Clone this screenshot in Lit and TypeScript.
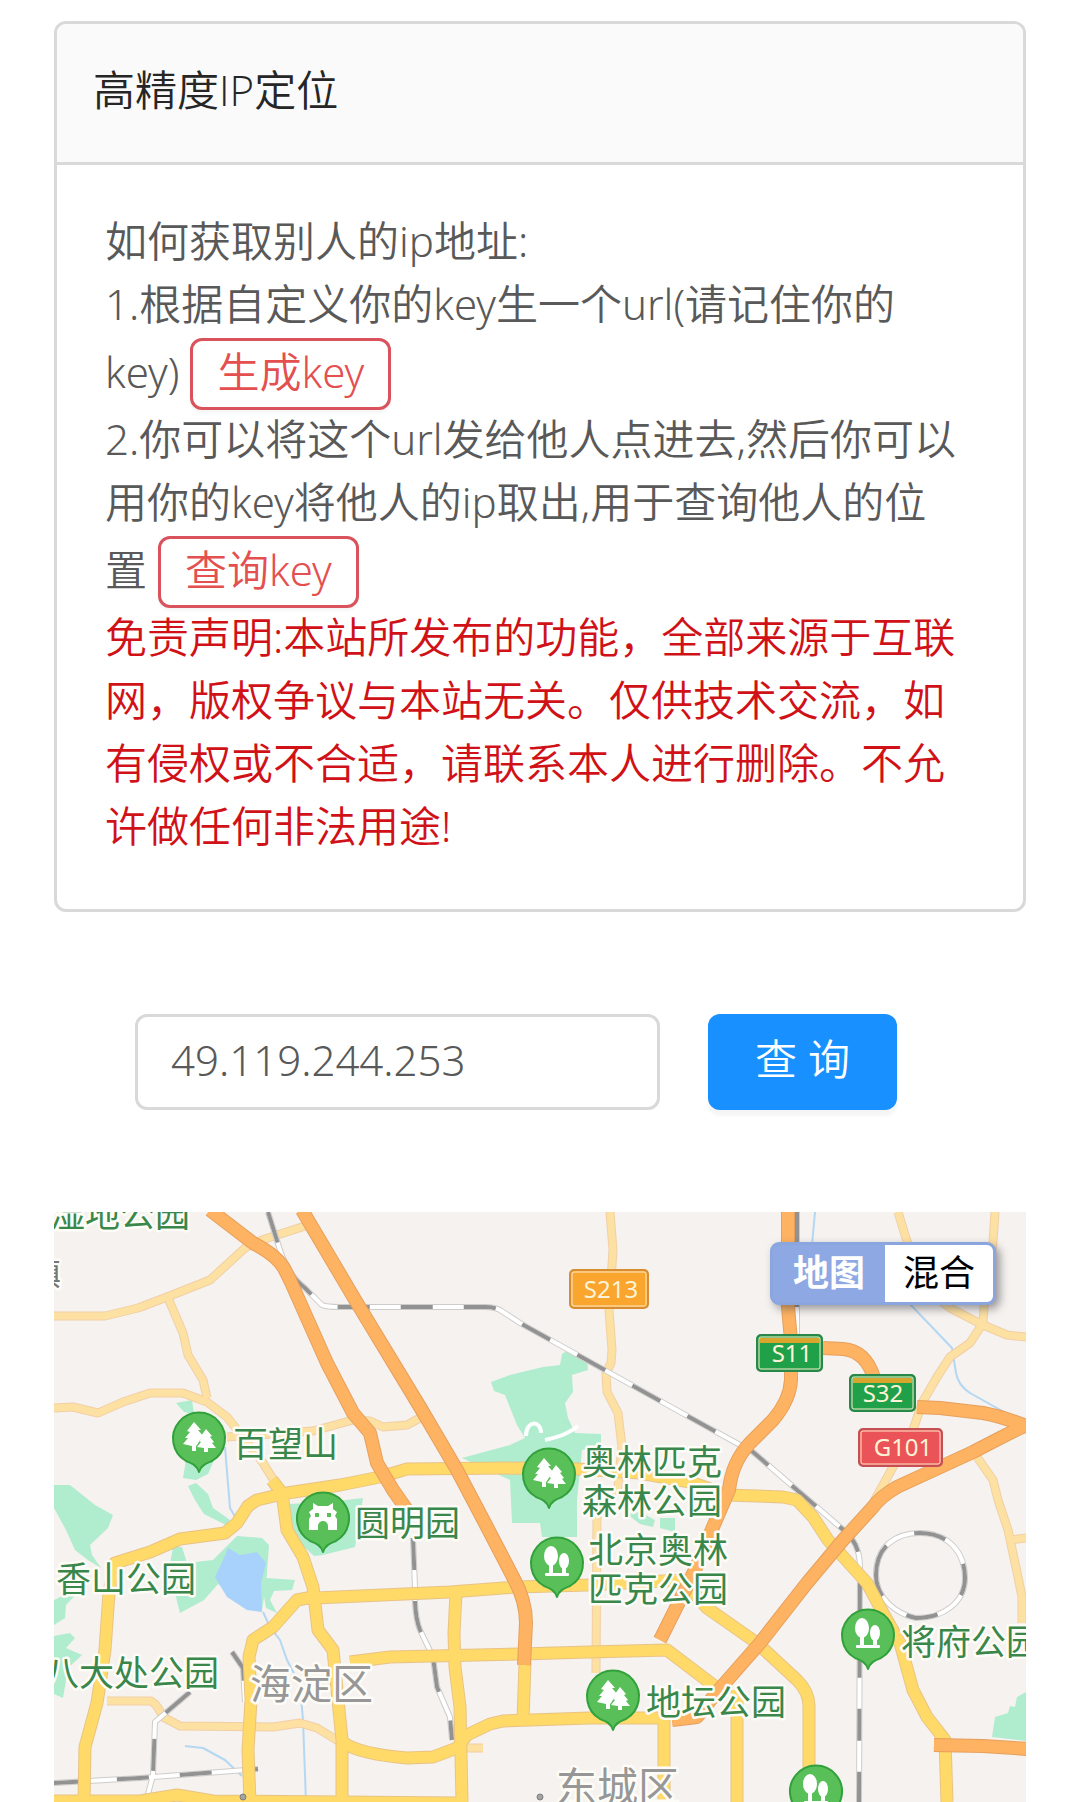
import { LitElement, html, svg, css } from "lit";
import { customElement, property, state } from "lit/decorators.js";
import { classMap } from "lit/directives/class-map.js";

type PinKind = "pines" | "trees" | "gate";

interface Place {
  x: number;
  y: number;
  kind: PinKind;
  labelX: number;
  labelY: number;
  lines: string[];
}

interface Shield {
  x: number;
  y: number;
  w: number;
  h: number;
  textX: number;
  textY: number;
  kind: string;
  label: string;
}

const places: Place[] = [
  { x: 199, y: 1438, kind: "pines", labelX: 233, labelY: 1457, lines: ["百望山"] },
  { x: 323, y: 1518, kind: "gate", labelX: 355, labelY: 1536, lines: ["圆明园"] },
  { x: 549, y: 1474, kind: "pines", labelX: 582, labelY: 1475, lines: ["奥林匹克", "森林公园"] },
  { x: 557, y: 1563, kind: "trees", labelX: 588, labelY: 1563, lines: ["北京奥林", "匹克公园"] },
  { x: 613, y: 1696, kind: "pines", labelX: 646, labelY: 1715, lines: ["地坛公园"] },
  { x: 868, y: 1635, kind: "trees", labelX: 901, labelY: 1655, lines: ["将府公园"] },
  { x: 816, y: 1791, kind: "trees", labelX: 0, labelY: 0, lines: [] },
];

const shields: Shield[] = [
  { x: 569, y: 1269, w: 80, h: 40, textX: 611, textY: 1298, kind: "provincial", label: "S213" },
  { x: 756, y: 1334, w: 67, h: 38, textX: 792, textY: 1362, kind: "express", label: "S11" },
  { x: 849, y: 1374, w: 67, h: 38, textX: 883, textY: 1402, kind: "express", label: "S32" },
  { x: 858, y: 1428, w: 85, h: 39, textX: 903, textY: 1456, kind: "national", label: "G101" },
];

const greens: string[] = [
  "54,1485 70,1485 95,1505 113,1515 108,1528 90,1545 92,1555 101,1568 88,1560 75,1550 66,1530 54,1508",
  "54,1600 85,1585 66,1605 65,1618 54,1625",
  "54,1636 70,1633 75,1638 66,1648 82,1655 68,1668 63,1698 54,1694",
  "491,1382 510,1375 543,1367 560,1365 562,1354 568,1350 587,1357 588,1370 572,1375 573,1392 565,1403 568,1418 575,1433 601,1434 601,1446 582,1450 577,1500 577,1537 542,1537 540,1523 512,1523 510,1480 462,1458 510,1445 525,1438 517,1425 505,1395 494,1391",
  "627,1514 640,1512 655,1520 653,1527 640,1524",
  "660,1518 675,1518 675,1532 660,1528",
  "176,1403 192,1400 194,1414 184,1412",
  "186,1460 214,1460 208,1474 196,1480 183,1478",
  "188,1486 196,1483 208,1494 213,1508 230,1520 226,1525 204,1514 195,1500",
  "173,1547 182,1547 187,1563 213,1560 230,1543 237,1536 262,1538 269,1545 266,1585 262,1610 240,1600 218,1584 204,1600 180,1613 176,1597 168,1575",
  "266,1578 295,1580 292,1590 274,1591 270,1600 277,1613 266,1608 263,1590",
  "288,1504 330,1502 363,1498 355,1547 323,1555 314,1556 293,1537",
  "1026,1692 1017,1697 1015,1707 1010,1706 1008,1713 995,1717 992,1737 1026,1741",
];

const rivers: string[] = [
  "M225 1447 L230 1508 L237 1520",
  "M263 1612 L270 1627 L280 1640 L287 1660 L300 1685 L303 1720 L306 1802",
  "M815 1212 L812 1245",
  "M908 1302 L952 1348 L956 1373 Q958 1385 970 1393 L1004 1412",
  "M185 1746 L203 1748 L225 1760 L242 1776",
];

const rails: string[] = [
  "M268 1212 L280 1250 Q288 1275 305 1288 L322 1305 Q326 1307 340 1307 L485 1307 Q494 1307 500 1310 L520 1323 L700 1423 L753 1452 L840 1527 Q860 1541 860 1567 L859 1802",
  "M413 1538 L415 1587 Q414 1615 420 1630 L433 1657 L437 1687 L450 1717 L452 1740",
  "M54 1783 L140 1778 L258 1769",
  "M190 1692 L155 1722 L153 1775 L147 1798",
  "M232 1652 L243 1668 L245 1702",
  "M797 1212 L797 1335",
  "M876 1575 C876 1546 896 1533 920 1533 C948 1533 965 1552 965 1578 C965 1602 944 1618 916 1618 C896 1614 876 1598 876 1575",
];

const minorRoads: string[] = [
  "M54 1316 L105 1316 L138 1308 L167 1297 L210 1280 L245 1248 L262 1240 L305 1226",
  "M168 1298 L183 1333 L188 1355 L203 1380 L207 1398",
  "M54 1408 L73 1407 L98 1413 L123 1402 L150 1393 L183 1393 L207 1402 L227 1417 L247 1442 L263 1463 L278 1487",
  "M227 1437 L313 1431 L353 1420 L370 1421 L383 1427 L407 1425 L420 1418",
  "M610 1212 L613 1250 L609 1310 L612 1350 L611 1363 L606 1373 L607 1392 L618 1413 L622 1447 L618 1487 L597 1510 L596 1673",
  "M898 1212 L905 1235 L915 1265 L940 1300 L950 1308 L983 1325 L1007 1335 L1026 1337",
  "M995 1212 L993 1242 L984 1307 L983 1323 L970 1343 L950 1357 L937 1377 L922 1403 L913 1430 L893 1467 L872 1505",
  "M977 1457 L993 1480 L998 1500 L1008 1530 L1018 1577 L1022 1597 L1022 1623",
  "M1010 1540 L1026 1538",
  "M107 1701 L150 1701 Q156 1702 163 1717 L180 1726 L273 1727 L300 1723 L317 1728 L340 1742",
  "M467 1748 L483 1748",
];

const mainRoads: string[] = [
  "M84 1802 L85 1747 L97 1703 L105 1650 L109 1593 L115 1563 L150 1552 L180 1539 L225 1533 L237 1523 L248 1506 L257 1500 L287 1493 L340 1485 L380 1477 L407 1469 L523 1468 L577 1469 L640 1473 L690 1482 L727 1495 L783 1497 L797 1500 L813 1517 L828 1540 L867 1583 L883 1613 L900 1643 L913 1690 L927 1717 L945 1740 L947 1802",
  "M272 1480 L282 1493 L287 1530 L303 1557 L313 1587 L318 1630 L333 1650 L338 1700 L342 1740 L342 1802",
  "M315 1598 L450 1592 L517 1587 L587 1585 L683 1580 L707 1608 L757 1643 L797 1680 Q809 1692 809 1706 L809 1802",
  "M313 1597 L297 1600 L273 1627 L253 1640 L249 1657 L251 1700 L248 1750 L250 1802",
  "M350 1662 L390 1657 L520 1654 L590 1652 L667 1650 L717 1688",
  "M456 1593 L454 1633 L455 1667 L460 1707 L462 1802",
  "M525 1663 L523 1720",
  "M344 1743 Q360 1754 407 1758 L433 1757 L457 1748 L467 1735 L490 1724 L503 1721 L590 1718 L664 1718 L664 1802",
  "M737 1690 L737 1802",
  "M54 1801 L140 1801 L177 1795 L213 1801 L460 1803",
];

const highways: string[] = [
  "M210 1210 L253 1243 Q278 1256 285 1270 L290 1280 L327 1363 L353 1413 L370 1433 L377 1463 L393 1490 L407 1510",
  "M302 1210 L357 1303 L420 1407 L457 1470 L487 1527 L513 1577 Q526 1600 526 1623 L524 1665",
  "M788 1210 L788 1307 L791 1340 L791 1380 Q790 1400 773 1420 L750 1443 Q732 1462 729 1490 L713 1527 L695 1570 L660 1640",
  "M823 1348 L843 1349 Q866 1351 874 1378",
  "M917 1407 L940 1408 L983 1413 Q1005 1417 1028 1427",
  "M1028 1424 L1000 1438 L973 1452 L897 1487 Q880 1497 873 1507 L843 1540 L807 1583 L760 1643 L717 1692 L697 1717 L672 1720",
  "M934 1745 L983 1746 L1028 1749",
];

@customElement("map-view")
export class MapView extends LitElement {
  @state() private mode = "地图";

  static styles = css`
    :host {
      display: block;
      position: relative;
      overflow: hidden;
      background: #f5f2ef;
      font-weight: 400;
    }
    .canvas {
      display: block;
      width: 100%;
      height: auto;
    }
    .green { fill: #b0ecce; }
    .lake { fill: #a8d2fb; }
    .river { fill: none; stroke: #b4d7f2; stroke-width: 2; }
    path { stroke-linejoin: round; }
    .rail-edge { fill: none; stroke: #cfcdcb; stroke-width: 6; }
    .rail-base { fill: none; stroke: #ffffff; stroke-width: 4; }
    .rail-dash { fill: none; stroke: #929292; stroke-width: 4; stroke-dasharray: 32 31; }
    .minor-edge { fill: none; stroke: #f2cfa4; stroke-width: 9; }
    .minor { fill: none; stroke: #fde1a3; stroke-width: 7; }
    .main-edge { fill: none; stroke: #e9c384; stroke-width: 13; }
    .main { fill: none; stroke: #ffda69; stroke-width: 11; }
    .highway-edge { fill: none; stroke: #e79f5c; stroke-width: 14; }
    .highway { fill: none; stroke: #feb362; stroke-width: 12; }
    .label {
      font-family: "Noto Sans CJK SC", sans-serif;
      font-size: 35px;
      fill: #39874a;
      stroke: #fdfcf6;
      stroke-width: 5px;
      stroke-linejoin: round;
      paint-order: stroke;
    }
    .district { font-size: 41px; fill: #979797; }
    .town { font-size: 32px; fill: #777777; }
    .town-dot { fill: #a3a3a3; stroke: #7d7d7d; stroke-width: 1; }
    .pin { fill: #58bf59; stroke: #32a13b; stroke-width: 2; }
    .glyph { fill: #ffffff; }
    .hole { fill: #58bf59; }
    .plate-text {
      font-family: "Noto Sans", sans-serif;
      font-size: 24px;
      fill: #fdf3d6;
      text-anchor: middle;
    }
    .plate-line { fill: none; stroke: #fdeccb; stroke-width: 1; }
    .provincial { fill: #faa52e; stroke: #d98d33; stroke-width: 2; }
    .express { fill: #21a04a; stroke: #27884a; stroke-width: 2; }
    .express-top { fill: #d8a62c; }
    .national { fill: #ea5357; stroke: #c45055; stroke-width: 2; }
    .switch {
      position: absolute;
      top: 30px;
      right: 30px;
      display: flex;
      box-sizing: border-box;
      border: 3px solid #8ba5df;
      border-radius: 9px;
      background: #8ba5df;
      box-shadow: 4px 4px 8px rgba(60, 60, 70, 0.5);
    }
    .mode {
      border: 0;
      margin: 0;
      padding: 0 18px 8px;
      height: 57px;
      font-family: "Noto Sans CJK SC", sans-serif;
      font-size: 36px;
      line-height: 48px;
      background: #ffffff;
      color: #000000;
      cursor: pointer;
    }
    .mode:first-child { border-radius: 6px 0 0 6px; }
    .mode:last-child { border-radius: 0 6px 6px 0; }
    .mode.active {
      padding: 0 20px 8px;
      background: #8ea8e3;
      color: #ffffff;
      font-weight: 700;
    }
  `;

  private glyph(kind: PinKind) {
    if (kind === "pines") {
      return svg`
        <path class="glyph" d="M-5 -16 L2 -8 L-1 -8 L5 -1 L1 2 L-2 7 L-3 8 L-3 13 L-7 13 L-7 8 L-16 6 L-11 0 L-14 0 L-9 -6 L-12 -7 Z" />
        <path class="glyph" d="M7 -9 L13 -2 L11 -1 L15 4 L13 5 L17 10 L9 10 L9 14 L5 14 L5 10 L-2 9 L2 4 L0 3 L4 -1 L2 -2 Z" />`;
    }
    if (kind === "trees") {
      return svg`
        <ellipse class="glyph" cx="-6" cy="-7" rx="7" ry="10" />
        <rect class="glyph" x="-8" y="0" width="4" height="13" />
        <ellipse class="glyph" cx="7" cy="-2" rx="5" ry="8" />
        <rect class="glyph" x="5" y="3" width="4" height="10" />
        <rect class="glyph" x="-12" y="10" width="24" height="3" rx="1" />`;
    }
    return svg`
      <path class="glyph" d="M-10 -15 L-5 -12 L5 -12 L10 -15 L10 -9 L14 -6 L12 -2 L14 1 L14 12 L5 12 L5 8 A5 5 0 0 0 -5 8 L-5 12 L-14 12 L-14 1 L-12 -2 L-14 -6 L-10 -9 Z" />
      <rect class="hole" x="-8" y="-5" width="4" height="4" />
      <rect class="hole" x="4" y="-5" width="4" height="4" />`;
  }

  private pin(p: Place) {
    return svg`
      <g transform="translate(${p.x} ${p.y})">
        <path class="pin" d="M0 34 C-2 27 -8 25 -13 23 A26 26 0 1 1 13 23 C8 25 2 27 0 34 Z" />
        ${this.glyph(p.kind)}
      </g>
      ${p.lines.map(
        (line, i) => svg`<text class="label" x=${p.labelX} y=${p.labelY + i * 39}>${line}</text>`,
      )}`;
  }

  private shield(s: Shield) {
    return svg`
      <rect class=${s.kind} x=${s.x + 1} y=${s.y + 1} width=${s.w - 2} height=${s.h - 2} rx="4" />
      ${s.kind === "express"
        ? svg`<rect class="express-top" x=${s.x + 4} y=${s.y + 4} width=${s.w - 8} height="5" />`
        : null}
      <rect class="plate-line" x=${s.x + 3} y=${s.y + 3} width=${s.w - 6} height=${s.h - 6} rx="2" />
      <text class="plate-text" x=${s.textX} y=${s.textY}>${s.label}</text>`;
  }

  private strokes(paths: string[], ...classes: string[]) {
    return classes.map((c) => paths.map((d) => svg`<path class=${c} d=${d} />`));
  }

  render() {
    return html`
      <svg class="canvas" viewBox="54 1212 972 590" role="img" aria-label="地图">
        ${greens.map((points) => svg`<polygon class="green" points=${points} />`)}
        <path class="rail-base" fill="none" d="M526 1436 C526 1420 541 1420 541 1433 M545 1440 Q566 1436 578 1426" />
        <polygon class="lake" points="228,1548 240,1555 257,1552 266,1563 261,1583 262,1612 247,1610 227,1597 215,1577 223,1560" />
        ${this.strokes(rivers, "river")}
        ${this.strokes(minorRoads, "minor-edge", "minor")}
        ${this.strokes(rails, "rail-edge", "rail-base", "rail-dash")}
        ${this.strokes(mainRoads, "main-edge", "main")}
        ${this.strokes(highways, "highway-edge", "highway")}
        <text class="label" x="50" y="1227">湿地公园</text>
        <text class="label town" x="29" y="1285">镇</text>
        <text class="label" x="56" y="1592">香山公园</text>
        <text class="label" x="44" y="1686">八大处公园</text>
        <text class="label district" x="250" y="1699">海淀区</text>
        <text class="label district" x="556" y="1802">东城区</text>
        <circle class="town-dot" cx="243" cy="1797" r="3" />
        <circle class="town-dot" cx="540" cy="1797" r="3" />
        ${shields.map((s) => this.shield(s))}
        ${places.map((p) => this.pin(p))}
      </svg>
      <div class="switch">
        ${["地图", "混合"].map(
          (m) => html`<button
            type="button"
            class=${classMap({ mode: true, active: this.mode === m })}
            @click=${() => (this.mode = m)}
          >${m}</button>`,
        )}
      </div>
    `;
  }
}

@customElement("app-root")
export class AppRoot extends LitElement {
  @property() ip = "49.119.244.253";

  static styles = css`
    :host {
      display: flex;
      flex-direction: column;
      box-sizing: border-box;
      padding: 21px 54px 0;
      background: #ffffff;
      color: #595959;
      font-family: "Noto Sans", "Noto Sans CJK SC", sans-serif;
      font-size: 42px;
      font-weight: 350;
      line-height: 63px;
    }
    .card {
      border: 3px solid #d9d9d9;
      border-radius: 12px;
      overflow: hidden;
    }
    .title {
      margin: 0;
      padding: 34px 36px 41px;
      border-bottom: 3px solid #d9d9d9;
      background: #fafafa;
      color: #262626;
      font-family: "Open Sans", "Noto Sans CJK SC", sans-serif;
      font-size: 42px;
      font-weight: 350;
    }
    .body {
      padding: 44px 60px 52px 48px;
    }
    .text {
      margin: 0;
    }
    .warning {
      color: #d01218;
    }
    .key {
      box-sizing: border-box;
      height: 72px;
      margin: 3px 0 -3px;
      padding: 0 24px 4px;
      border: 3px solid #d9525c;
      border-radius: 12px;
      background: #ffffff;
      color: #e4504f;
      font: inherit;
      line-height: 60px;
      box-shadow: 0 3px 3px rgba(0, 0, 0, 0.04);
      cursor: pointer;
    }
    .search {
      display: grid;
      grid-template-columns: minmax(0, 1fr) 189px;
      gap: 48px;
      padding: 102px 129px 102px 81px;
    }
    .ip {
      box-sizing: border-box;
      min-width: 0;
      height: 96px;
      padding: 0 33px 5px;
      border: 3px solid #d9d9d9;
      border-radius: 12px;
      background: #ffffff;
      color: #595959;
      font: inherit;
    }
    .submit {
      height: 96px;
      padding: 0 0 8px;
      border: 0;
      border-radius: 12px;
      background: #1890ff;
      color: #ffffff;
      font: inherit;
      box-shadow: 0 6px 3px rgba(0, 0, 0, 0.04);
      cursor: pointer;
    }
  `;

  render() {
    return html`
      <section class="card">
        <h1 class="title">高精度IP定位</h1>
        <div class="body">
          <p class="text">如何获取别人的ip地址:</p>
          <p class="text">
            1.根据自定义你的key生一个url(请记住你的key)
            <button type="button" class="key">生成key</button>
          </p>
          <p class="text">
            2.你可以将这个url发给他人点进去,然后你可以用你的key将他人的ip取出,用于查询他人的位置
            <button type="button" class="key">查询key</button>
          </p>
          <p class="text warning">
            免责声明:本站所发布的功能，全部来源于互联网，版权争议与本站无关。仅供技术交流，如有侵权或不合适，请联系本人进行删除。不允许做任何非法用途!
          </p>
        </div>
      </section>
      <form class="search" @submit=${(e: Event) => e.preventDefault()}>
        <input
          class="ip"
          type="text"
          aria-label="IP"
          .value=${this.ip}
          @input=${(e: Event) => (this.ip = (e.target as HTMLInputElement).value)}
        />
        <button type="submit" class="submit">查 询</button>
      </form>
      <map-view></map-view>
    `;
  }
}
